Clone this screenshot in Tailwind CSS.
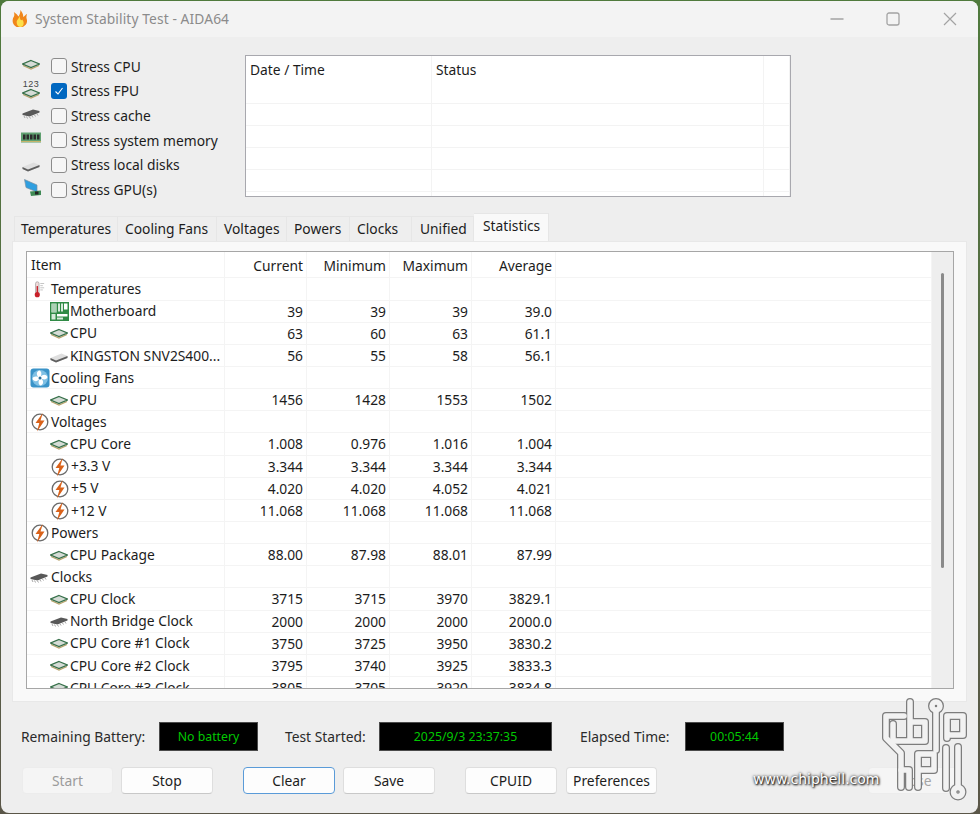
<!DOCTYPE html>
<html lang="en">
<head>
<meta charset="UTF-8" />
<title>System Stability Test - AIDA64</title>
<script src="https://cdn.jsdelivr.net/npm/@tailwindcss/browser@4"></script>
</head>
<body class="bg-gradient-to-b from-[#4f7a3c] to-[#5a5648] overflow-hidden">
<!-- Icon set -->
<svg class="hidden">
  <symbol id="cpu" viewBox="0 0 18 11">
    <path d="M1 6.500 9 10 17 6.500" fill="none" stroke="#b9a36c" stroke-width="1.200"/>
    <path d="M9 1.500 17.300 5 9 8.500 0.700 5Z" fill="#d5dcd6" stroke="#37704a" stroke-width="1.300"/>
  </symbol>
  <symbol id="chip" viewBox="0 0 18 11">
    <path d="M0.500 5.500 11 1.500 17.500 3 17.500 4.500 7.500 8.500 0.500 7Z" fill="#585858"/>
    <path d="M2 8 3 10M4.500 8.500 5.500 10.500M7.500 9 8.500 10.500M10 8 11 9.500M12.500 7 13.500 8.500M15 6 16 7.500" stroke="#a5a5a5" stroke-width="1" fill="none"/>
  </symbol>
  <symbol id="disk" viewBox="0 0 18 11">
    <path d="M0.500 6 11.500 1.500 17.500 4 17.500 6 6 10.500 0.500 8Z" fill="#dfdfdf"/>
    <path d="M0.500 6 6 8.500 17.500 4 17.500 6 6 10.500 0.500 8Z" fill="#5f5f5f"/>
  </symbol>
  <symbol id="volt" viewBox="0 0 20 20">
    <circle cx="10" cy="10" r="7.800" fill="#fff" stroke="#6a6a6a" stroke-width="1.300"/>
    <path d="M12.800 1 5.500 11h3.800L7 19.500 14.500 8.500H10.500Z" fill="#d9621a"/>
  </symbol>
  <symbol id="fan" viewBox="0 0 20 20">
    <rect x="0.500" y="0.500" width="19" height="19" rx="3" fill="#3a93c8"/>
    <circle cx="10" cy="10" r="8" fill="#7fc0e4"/>
    <path d="M10 10C6 8 6 4 9 2.500 12 3 12 7 10 10ZM10 10C12 6 16 6 17.500 9 17 12 13 12 10 10ZM10 10C14 12 14 16 11 17.500 8 17 8 13 10 10ZM10 10C8 14 4 14 2.500 11 3 8 7 8 10 10Z" fill="#fff"/>
    <circle cx="10" cy="10" r="1.500" fill="#2a6f9c"/>
  </symbol>
  <symbol id="thermo" viewBox="0 0 14 20">
    <rect x="3" y="1" width="4" height="14" rx="2" fill="#f2dcdc" stroke="#999" stroke-width="0.800"/>
    <rect x="4.200" y="6" width="1.600" height="9" fill="#c8202a"/>
    <circle cx="5" cy="16" r="3" fill="#c8202a"/>
    <path d="M8.500 3H13M8.500 5.500H11.500M8.500 8H13M8.500 10.500H11.500" stroke="#b5b5b5" stroke-width="0.900"/>
  </symbol>
  <symbol id="board" viewBox="0 0 19 19">
    <rect width="19" height="19" fill="#2f8a45"/>
    <rect x="1.500" y="1.500" width="5" height="9" fill="#fff"/>
    <path d="M3 1.500V10.500M5 1.500V10.500" stroke="#2f8a45" stroke-width="0.800"/>
    <rect x="8" y="1.500" width="2" height="8" fill="#d7eadb"/>
    <rect x="11" y="1.500" width="2" height="8" fill="#d7eadb"/>
    <rect x="14" y="1.500" width="3.500" height="6" fill="#fff"/>
    <rect x="1.500" y="12" width="4" height="5.500" fill="#d7eadb"/>
    <rect x="7" y="12" width="10.500" height="2.500" fill="#fff"/>
    <rect x="7" y="15.500" width="6" height="2" fill="#d7eadb"/>
  </symbol>
  <symbol id="ram" viewBox="0 0 20 11">
    <rect y="0.500" width="20" height="10" fill="#5fa070"/>
    <path d="M2 2.500h2.500v5H2ZM5.500 2.500h2.500v5H5.500ZM9 2.500h2.500v5H9ZM12.500 2.500H15v5h-2.500ZM16 2.500h2.500v5H16Z" fill="#2b2b2b"/>
    <path d="M0 9.500H20" stroke="#c7b56b" stroke-width="1"/>
  </symbol>
  <symbol id="gpu" viewBox="0 0 18 18">
    <path d="M0.500 0.500 13 6 13 13 2 8.500Z" fill="#2f9fe0" stroke="#7a8fa0" stroke-width="0.700"/>
    <path d="M6 12.500 17 11.500 17 16 7 17Z" fill="#3f8a55"/>
    <rect x="11" y="12.500" width="3.500" height="3" fill="#222"/>
  </symbol>
</svg>

<div class="relative w-[980px] h-[814px] font-['Noto_Sans',sans-serif] text-[13.8px] text-[#1c1c1c]">
  <!-- Window -->
  <div class="absolute left-[1px] top-[1px] w-[977px] h-[812px] rounded-lg bg-[#eeeeee] overflow-hidden flex flex-col">

    <!-- Title bar -->
    <div class="h-[36px] shrink-0 bg-[#f3f3f3] flex items-center pl-[10px] text-[#8b8b8b]">
      <svg class="w-[17px] h-[19px] -mt-[2px]" viewBox="0 0 18 20">
        <path d="M3 3C4 6 3.500 7 2.500 9 1 12 1.500 17 6 19H12C16 17.500 18 14 16.500 10 16 8 17 5 17 5 15 6.500 14 8 13 8.500 13 5 11.500 3 10 1 10 4 9 6 8 8 7 6 5.500 5 3 3Z" fill="#f0861a"/>
        <path d="M9 7C9 10 6 11 6 14 6 17 8 19 10 19 13 19 14 16 13 13 12.500 12 12 11 12 11 11 12 10.500 12 10 11 9.500 10 9.500 8 9 7Z" fill="#fde04a"/>
      </svg>
      <span class="ml-[7px] tracking-[0.1px]">System Stability Test - AIDA64</span>
      <div class="ml-auto flex items-center pr-[21px]">
        <svg class="w-[14px] h-[14px]" viewBox="0 0 14 14"><path d="M0.500 7H13.500" stroke="#a3a3a3" stroke-width="1.300"/></svg>
        <svg class="w-[14px] h-[14px] ml-[42px]" viewBox="0 0 14 14"><rect x="1" y="1" width="12" height="12" rx="2" fill="none" stroke="#a3a3a3" stroke-width="1.300"/></svg>
        <svg class="w-[14px] h-[14px] ml-[43px]" viewBox="0 0 14 14"><path d="M1 1 13 13M13 1 1 13" stroke="#a3a3a3" stroke-width="1.200"/></svg>
      </div>
    </div>

    <!-- Stress options and log -->
    <div class="flex h-[176px] shrink-0">
      <div class="pt-[17px] pl-[20px] w-[244px] [&>label>span:last-child]:pt-[1px]">
        <label class="flex items-center h-[24.7px]"><span class="w-[30px] pl-[1px]"><svg class="w-[18px] h-[11px] -mt-[4px]"><use href="#cpu"/></svg></span><span class="w-[16px] h-[16px] rounded-[3px] border-[1.5px] border-[#8c8c8c] bg-[#f6f6f6]"></span><span class="ml-[4px]">Stress CPU</span></label>
        <label class="flex items-center h-[24.7px]"><span class="w-[30px] pl-[1px]"><svg class="w-[18px] h-[21px] -mt-[4px]" viewBox="0 0 18 21"><text x="9" y="8" text-anchor="middle" font-size="9" letter-spacing="0.5" fill="#444" font-family="Liberation Sans">123</text><use href="#cpu" y="9" height="11" width="18"/></svg></span><span class="w-[16px] h-[16px] rounded-[3px] bg-[#0067c0] flex items-center justify-center"><svg class="w-[10px] h-[10px]" viewBox="0 0 10 10"><path d="M1.500 5.500 4 8 8.500 2" fill="none" stroke="#fff" stroke-width="1.100"/></svg></span><span class="ml-[4px]">Stress FPU</span></label>
        <label class="flex items-center h-[24.7px]"><span class="w-[30px] pl-[1px]"><svg class="w-[18px] h-[11px] -mt-[4px]"><use href="#chip"/></svg></span><span class="w-[16px] h-[16px] rounded-[3px] border-[1.5px] border-[#8c8c8c] bg-[#f6f6f6]"></span><span class="ml-[4px]">Stress cache</span></label>
        <label class="flex items-center h-[24.7px]"><span class="w-[30px]"><svg class="w-[20px] h-[11px] -mt-[5px]"><use href="#ram"/></svg></span><span class="w-[16px] h-[16px] rounded-[3px] border-[1.5px] border-[#8c8c8c] bg-[#f6f6f6]"></span><span class="ml-[4px]">Stress system memory</span></label>
        <label class="flex items-center h-[24.7px]"><span class="w-[30px] pl-[1px]"><svg class="w-[18px] h-[11px] mt-[3px]"><use href="#disk"/></svg></span><span class="w-[16px] h-[16px] rounded-[3px] border-[1.5px] border-[#8c8c8c] bg-[#f6f6f6]"></span><span class="ml-[4px]">Stress local disks</span></label>
        <label class="flex items-center h-[24.7px]"><span class="w-[30px] pl-[3px]"><svg class="w-[18px] h-[18px] -mt-[3px]"><use href="#gpu"/></svg></span><span class="w-[16px] h-[16px] rounded-[3px] border-[1.5px] border-[#8c8c8c] bg-[#f6f6f6]"></span><span class="ml-[4px]">Stress GPU(s)</span></label>
      </div>
      <div class="mt-[18px] w-[546px] h-[142px] border border-[#a8a8ae] bg-white overflow-hidden grid grid-cols-[186px_332px_1fr] grid-rows-[48px_22px_22px_22px_22px_22px] [&>div]:border-b [&>div]:border-r [&>div]:border-[#f3f3f3] [&>div]:pl-[4px] [&>div]:pt-[4px]">
        <div>Date / Time</div><div>Status</div><div></div>
        <div></div><div></div><div></div>
        <div></div><div></div><div></div>
        <div></div><div></div><div></div>
        <div></div><div></div><div></div>
        <div></div><div></div><div></div>
      </div>
    </div>

    <!-- Tabs -->
    <div class="flex items-end h-[28px] shrink-0 pl-[13px]">
      <div class="w-[104px] h-[25px] pl-[6px] leading-[24px] border-t border-r border-l border-[#e6e6e6]">Temperatures</div>
      <div class="w-[99px] h-[25px] pl-[7px] leading-[24px] border-t border-r border-[#e6e6e6]">Cooling Fans</div>
      <div class="w-[70px] h-[25px] pl-[7px] leading-[24px] border-t border-r border-[#e6e6e6]">Voltages</div>
      <div class="w-[63px] h-[25px] pl-[7px] leading-[24px] border-t border-r border-[#e6e6e6]">Powers</div>
      <div class="w-[62px] h-[25px] pl-[7px] leading-[24px] border-t border-r border-[#e6e6e6]">Clocks</div>
      <div class="w-[62px] h-[25px] pl-[8px] leading-[24px] border-t border-r border-[#e6e6e6]">Unified</div>
      <div class="w-[75px] h-[28px] pl-[9px] leading-[24px] bg-[#f9f9f9] border-t border-r border-[#e6e6e6]">Statistics</div>
    </div>

    <!-- Statistics panel -->
    <div class="ml-[11px] w-[955px] h-[461px] shrink-0 bg-[#f9f9f9] border border-[#e8e8e8] pl-[13px] pt-[9px]">
      <div class="w-[928px] h-[438px] border border-[#a6a6a6] bg-white flex overflow-hidden">
        <div class="w-[905px] h-full overflow-hidden">
          <div class="grid grid-cols-[198px_82px_83px_82px_84px_376px] grid-rows-[26.4px] auto-rows-[22.15px] [&>div]:flex [&>div]:items-center [&>div]:whitespace-nowrap [&>div]:border-b [&>div]:border-r [&>div]:border-[#f4f4f4] [&>div]:pt-[1px] [&>span]:border-b [&>span]:border-r [&>span]:border-[#f4f4f4] [&>span]:text-right [&>span]:pr-[3px] [&>span]:leading-[21px]">
            <div class="pl-[4px]">Item</div><span class="pt-[3px]">Current</span><span class="pt-[3px]">Minimum</span><span class="pt-[3px]">Maximum</span><span class="pt-[3px]">Average</span><span></span>
            <div class="pl-[6px]"><svg class="w-[12px] h-[19px]"><use href="#thermo"/></svg><span class="ml-[6px]">Temperatures</span></div><span></span><span></span><span></span><span></span><span></span>
            <div class="pl-[23px]"><svg class="w-[19px] h-[19px]"><use href="#board"/></svg><span class="ml-[1px]">Motherboard</span></div><span>39</span><span>39</span><span>39</span><span>39.0</span><span></span>
            <div class="pl-[23px]"><svg class="w-[18px] h-[11px]"><use href="#cpu"/></svg><span class="ml-[2px]">CPU</span></div><span>63</span><span>60</span><span>63</span><span>61.1</span><span></span>
            <div class="pl-[23px]"><svg class="w-[18px] h-[11px] mt-[3px]"><use href="#disk"/></svg><span class="ml-[2px]">KINGSTON SNV2S400...</span></div><span>56</span><span>55</span><span>58</span><span>56.1</span><span></span>
            <div class="pl-[3px]"><svg class="w-[20px] h-[20px]"><use href="#fan"/></svg><span class="ml-[1px]">Cooling Fans</span></div><span></span><span></span><span></span><span></span><span></span>
            <div class="pl-[23px]"><svg class="w-[18px] h-[11px]"><use href="#cpu"/></svg><span class="ml-[2px]">CPU</span></div><span>1456</span><span>1428</span><span>1553</span><span>1502</span><span></span>
            <div class="pl-[3px]"><svg class="w-[20px] h-[20px]"><use href="#volt"/></svg><span class="ml-[1px]">Voltages</span></div><span></span><span></span><span></span><span></span><span></span>
            <div class="pl-[23px]"><svg class="w-[18px] h-[11px]"><use href="#cpu"/></svg><span class="ml-[2px]">CPU Core</span></div><span>1.008</span><span>0.976</span><span>1.016</span><span>1.004</span><span></span>
            <div class="pl-[23px]"><svg class="w-[20px] h-[20px]"><use href="#volt"/></svg><span class="ml-[1px]">+3.3 V</span></div><span>3.344</span><span>3.344</span><span>3.344</span><span>3.344</span><span></span>
            <div class="pl-[23px]"><svg class="w-[20px] h-[20px]"><use href="#volt"/></svg><span class="ml-[1px]">+5 V</span></div><span>4.020</span><span>4.020</span><span>4.052</span><span>4.021</span><span></span>
            <div class="pl-[23px]"><svg class="w-[20px] h-[20px]"><use href="#volt"/></svg><span class="ml-[1px]">+12 V</span></div><span>11.068</span><span>11.068</span><span>11.068</span><span>11.068</span><span></span>
            <div class="pl-[3px]"><svg class="w-[20px] h-[20px]"><use href="#volt"/></svg><span class="ml-[1px]">Powers</span></div><span></span><span></span><span></span><span></span><span></span>
            <div class="pl-[23px]"><svg class="w-[18px] h-[11px]"><use href="#cpu"/></svg><span class="ml-[2px]">CPU Package</span></div><span>88.00</span><span>87.98</span><span>88.01</span><span>87.99</span><span></span>
            <div class="pl-[3px]"><svg class="w-[18px] h-[11px]"><use href="#chip"/></svg><span class="ml-[3px]">Clocks</span></div><span></span><span></span><span></span><span></span><span></span>
            <div class="pl-[23px]"><svg class="w-[18px] h-[11px]"><use href="#cpu"/></svg><span class="ml-[2px]">CPU Clock</span></div><span>3715</span><span>3715</span><span>3970</span><span>3829.1</span><span></span>
            <div class="pl-[23px]"><svg class="w-[18px] h-[11px]"><use href="#chip"/></svg><span class="ml-[2px]">North Bridge Clock</span></div><span>2000</span><span>2000</span><span>2000</span><span>2000.0</span><span></span>
            <div class="pl-[23px]"><svg class="w-[18px] h-[11px]"><use href="#cpu"/></svg><span class="ml-[2px]">CPU Core #1 Clock</span></div><span>3750</span><span>3725</span><span>3950</span><span>3830.2</span><span></span>
            <div class="pl-[23px]"><svg class="w-[18px] h-[11px]"><use href="#cpu"/></svg><span class="ml-[2px]">CPU Core #2 Clock</span></div><span>3795</span><span>3740</span><span>3925</span><span>3833.3</span><span></span>
            <div class="pl-[23px]"><svg class="w-[18px] h-[11px]"><use href="#cpu"/></svg><span class="ml-[2px]">CPU Core #3 Clock</span></div><span>3805</span><span>3705</span><span>3920</span><span>3834.8</span><span></span>
          </div>
        </div>
        <!-- Scrollbar -->
        <div class="w-[21px] bg-[#eeeeee] pt-[21px] pl-[9px]">
          <div class="w-[3px] h-[295px] rounded-full bg-[#8a8a8a]"></div>
        </div>
      </div>
    </div>

    <!-- Status row -->
    <div class="flex items-center h-[29px] mt-[20px] shrink-0 pl-[20px] text-[#2a2a2a]">
      <span class="w-[138px] pt-[1px]">Remaining Battery:</span>
      <span class="w-[99px] h-[29px] bg-black border border-[#4a4a4a] text-[#00c800] text-[12.3px] leading-[28px] text-center">No battery</span>
      <span class="ml-[27px] w-[94px] pt-[1px]">Test Started:</span>
      <span class="w-[173px] h-[29px] bg-black border border-[#4a4a4a] text-[#00c800] text-[12.3px] leading-[28px] text-center">2025/9/3 23:37:35</span>
      <span class="ml-[28px] w-[105px] pt-[1px]">Elapsed Time:</span>
      <span class="w-[99px] h-[29px] bg-black border border-[#4a4a4a] text-[#00c800] text-[12.3px] leading-[28px] text-center">00:05:44</span>
    </div>

    <!-- Buttons -->
    <div class="flex h-[27px] mt-[16px] shrink-0 pl-[21px] text-center leading-[25px]">
      <button class="w-[91px] h-[27px] rounded-[4px] bg-[#f5f5f5] border border-[#ececec] text-[#9b9b9b]">Start</button>
      <button class="ml-[8px] w-[92px] h-[27px] rounded-[4px] bg-[#fdfdfd] border border-[#dedede] border-b-[#c8c8c8]">Stop</button>
      <button class="ml-[30px] w-[92px] h-[27px] rounded-[4px] bg-[#fdfdfd] border border-[#5a9bd8]">Clear</button>
      <button class="ml-[8px] w-[92px] h-[27px] rounded-[4px] bg-[#fdfdfd] border border-[#dedede] border-b-[#c8c8c8]">Save</button>
      <button class="ml-[30px] w-[92px] h-[27px] rounded-[4px] bg-[#fdfdfd] border border-[#dedede] border-b-[#c8c8c8]">CPUID</button>
      <button class="ml-[9px] w-[91px] h-[27px] rounded-[4px] bg-[#fdfdfd] border border-[#dedede] border-b-[#c8c8c8]">Preferences</button>
      <button class="ml-[211px] w-[92px] h-[27px] rounded-[4px] bg-[#f5f5f5] border border-[#ececec] text-[#a5a5a5]">Close</button>
    </div>
  </div>

  <!-- Watermark over the window -->
  <svg class="absolute left-[875px] top-[695px] w-[100px] h-[115px]" viewBox="875 695 100 115" fill="none" stroke-linejoin="round" stroke-linecap="round">
    <g stroke="#7d7d7d" stroke-width="8">
      <path d="M904 716H886V738L901 753V787"/>
      <path d="M893 724V741H925V722H910M910 702V741"/>
      <path d="M936 711V750"/><circle cx="936" cy="706" r="4"/>
      <path d="M947 738V716H963V735H950"/>
      <path d="M901 770H909V787M918 787V754H934V770H918"/>
      <path d="M946 748V788M958 747V786"/><circle cx="958" cy="792" r="4.500"/>
    </g>
    <g stroke="#f2f2f2" stroke-width="5.500">
      <path d="M904 716H886V738L901 753V787"/>
      <path d="M893 724V741H925V722H910M910 702V741"/>
      <path d="M936 711V750"/><circle cx="936" cy="706" r="4"/>
      <path d="M947 738V716H963V735H950"/>
      <path d="M901 770H909V787M918 787V754H934V770H918"/>
      <path d="M946 748V788M958 747V786"/><circle cx="958" cy="792" r="4.500"/>
    </g>
  </svg>
  <span class="absolute left-[753px] top-[770px] text-[14px] leading-[18px] font-['DejaVu_Sans',sans-serif] text-white [text-shadow:0_0_3px_#000,1px_1px_2px_#000]">www.chiphell.com</span>
</div>
</body>
</html>
